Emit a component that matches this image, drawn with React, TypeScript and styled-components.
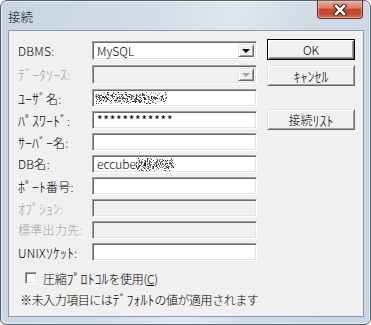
import React from 'react';
import styled, { createGlobalStyle, css } from 'styled-components';

const FONT = `"Noto Sans CJK JP", "Liberation Sans", sans-serif`;

const Global = createGlobalStyle`
  html, body { margin: 0; padding: 0; background: #ffffff; }
  body { width: 371px; height: 325px; overflow: hidden; }
  * { box-sizing: border-box; }
`;

const sunken = css`
  border: 1px solid;
  border-color: #a0a0a0 #ffffff #ffffff #a0a0a0;
  box-shadow: inset 1px 1px 0 #696969, inset -1px -1px 0 #e3e3e3;
`;

const raised = css`
  border: 1px solid;
  border-color: #e3e3e3 #696969 #696969 #e3e3e3;
  box-shadow: inset 1px 1px 0 #ffffff, inset -1px -1px 0 #a0a0a0;
`;

const Frame = styled.div`
  width: 371px;
  height: 325px;
  border: 1px solid #56616e;
  border-radius: 7px 7px 6px 6px;
  background: linear-gradient(100deg, #c9d5e3 0%, #d3dde8 38%, #e1e7ee 56%, #d2dce7 70%, #c9d5e2 100%);
  box-shadow: inset 0 0 0 1px rgba(255, 255, 255, 0.5);
  display: flex;
  flex-direction: column;
  font-family: ${FONT};
  font-weight: 300;
  overflow: hidden;
`;

/* half-width katakana run: Noto's half-width forms are drawn small, so they get a larger size */
const K = styled.span`
  font-size: 14px;
  line-height: 14px;
  letter-spacing: 0;
`;

const Masked = styled.span`
  letter-spacing: 0.75px;
  font-weight: 400;
`;

const TitleBar = styled.div`
  height: 29px;
  display: flex;
  align-items: flex-start;
  padding-left: 7px;
`;

const Title = styled.div`
  margin-top: 9px;
  font-size: 12.5px;
  line-height: 14px;
  color: #000000;
`;

const CloseButton = styled.div`
  margin-left: auto;
  margin-right: 7px;
  width: 46px;
  height: 18px;
  border: 1px solid #6a2b22;
  border-top: none;
  border-radius: 0 0 4px 4px;
  background: linear-gradient(180deg, #e9a99b 0%, #d9816c 40%, #c2452f 50%, #c44a33 75%, #d7745a 100%);
  box-shadow: inset 0 0 0 1px rgba(255, 210, 200, 0.45);
  display: flex;
  align-items: center;
  justify-content: center;
`;

const Client = styled.div`
  flex: 1;
  margin: 0 6px 7px 7px;
  border: 1px solid #8d99a7;
  background: #f0f0f0;
  display: grid;
  grid-template-columns: 239px 88px;
  column-gap: 10px;
  align-items: start;
  padding: 8px 8px 0 9px;
`;

const LeftCol = styled.div`
  display: flex;
  flex-direction: column;
  padding-top: 2px;
`;

const Row = styled.div<{ $h: number; $mb: number }>`
  display: flex;
  align-items: center;
  height: ${(p) => p.$h}px;
  margin-bottom: ${(p) => p.$mb}px;
`;

const Label = styled.div<{ $disabled?: boolean }>`
  width: 74px;
  font-size: 12px;
  line-height: 14px;
  letter-spacing: 0.3px;
  white-space: nowrap;
  color: ${(p) => (p.$disabled ? '#a2a2a2' : '#000000')};
`;

const TextBox = styled.div<{ $disabled?: boolean }>`
  ${sunken};
  width: 165px;
  height: 100%;
  padding-left: 4px;
  display: flex;
  align-items: center;
  font-size: 12px;
  line-height: 14px;
  color: #000000;
  white-space: nowrap;
  overflow: hidden;
  background: ${(p) => (p.$disabled ? '#f0f0f0' : '#ffffff')};
`;

const Combo = styled.div<{ $disabled?: boolean }>`
  ${sunken};
  width: 165px;
  height: 100%;
  display: flex;
  align-items: stretch;
  padding: 2px;
  background: ${(p) => (p.$disabled ? '#f0f0f0' : '#ffffff')};
`;

const ComboText = styled.div`
  flex: 1;
  display: flex;
  align-items: center;
  padding-left: 2px;
  font-size: 12px;
  line-height: 14px;
  color: #000000;
`;

const ComboArrow = styled.div`
  ${raised};
  width: 16px;
  background: #f0f0f0;
  display: flex;
  align-items: center;
  justify-content: center;
`;

const Triangle = styled.div<{ $disabled?: boolean }>`
  width: 0;
  height: 0;
  border-left: 4px solid transparent;
  border-right: 4px solid transparent;
  border-top: 4px solid ${(p) => (p.$disabled ? '#a0a0a0' : '#000000')};
`;

const RightCol = styled.div`
  display: flex;
  flex-direction: column;
`;

const Button = styled.div<{ $default?: boolean; $mt: number }>`
  height: 21px;
  margin-top: ${(p) => p.$mt}px;
  display: flex;
  align-items: center;
  justify-content: center;
  font-size: 12px;
  line-height: 14px;
  color: #000000;
  background: #f0f0f0;
  ${(p) =>
    p.$default
      ? css`
          border: 1px solid #000000;
          box-shadow: inset 1px 1px 0 #ffffff, inset -1px -1px 0 #696969, inset -2px -2px 0 #a0a0a0;
        `
      : raised};
`;

const CheckRow = styled.div`
  display: flex;
  align-items: center;
  height: 16px;
  margin-top: 9px;
  padding-left: 7px;
  gap: 6px;
`;

const CheckBox = styled.div`
  ${sunken};
  width: 12px;
  height: 12px;
  background: #ffffff;
`;

const CheckLabel = styled.div`
  font-size: 12px;
  line-height: 14px;
  letter-spacing: -0.3px;
  color: #000000;
  white-space: nowrap;
  u { text-decoration: underline; text-underline-offset: 1px; }
`;

const Note = styled.div`
  margin-top: 6px;
  padding-left: 2px;
  font-size: 12px;
  line-height: 14px;
  letter-spacing: -0.45px;
  color: #000000;
  white-space: nowrap;
`;

function makeRng(seed: number) {
  let s = seed;
  return () => {
    s = (s * 1103515245 + 12345) & 0x7fffffff;
    return s / 0x7fffffff;
  };
}

const Mosaic: React.FC<{ w: number; h: number; seed: number }> = ({ w, h, seed }) => {
  const r = makeRng(seed);
  const rects: React.ReactElement[] = [];
  for (let y = 0; y < h; y++) {
    for (let x = 0; x < w; x++) {
      const edge = y < 2 || y > h - 3 ? 0.18 : 0.42;
      if (r() < edge) {
        const g = Math.floor(20 + r() * 150);
        rects.push(<rect key={`${x}-${y}`} x={x} y={y} width={1} height={1} fill={`rgb(${g},${g},${g})`} />);
      }
    }
  }
  return (
    <svg width={w} height={h} shapeRendering="crispEdges" style={{ display: 'block', flexShrink: 0 }}>
      {rects}
    </svg>
  );
};

const CloseGlyph = () => (
  <svg width="14" height="12" viewBox="0 0 14 12">
    <path d="M3 2 L11 10 M11 2 L3 10" stroke="#3d1a14" strokeWidth="4.6" strokeLinecap="square" />
    <path d="M3 2 L11 10 M11 2 L3 10" stroke="#ffffff" strokeWidth="2.6" strokeLinecap="square" />
  </svg>
);

export default function App() {
  return (
    <>
      <Global />
      <Frame>
        <TitleBar>
          <Title>接続</Title>
          <CloseButton>
            <CloseGlyph />
          </CloseButton>
        </TitleBar>
        <Client>
          <LeftCol>
            <Row $h={19} $mb={5}>
              <Label>DBMS:</Label>
              <Combo>
                <ComboText>MySQL</ComboText>
                <ComboArrow>
                  <Triangle />
                </ComboArrow>
              </Combo>
            </Row>
            <Row $h={19} $mb={5}>
              <Label $disabled><K>ﾃﾞｰﾀｿｰｽ</K>:</Label>
              <Combo $disabled>
                <ComboText />
                <ComboArrow>
                  <Triangle $disabled />
                </ComboArrow>
              </Combo>
            </Row>
            <Row $h={18} $mb={4}>
              <Label><K>ﾕｰｻﾞ</K>名:</Label>
              <TextBox style={{ paddingLeft: 2 }}>
                <Mosaic w={72} h={12} seed={7} />
              </TextBox>
            </Row>
            <Row $h={18} $mb={4}>
              <Label><K>ﾊﾟｽﾜｰﾄﾞ</K>:</Label>
              <TextBox><Masked>************</Masked></TextBox>
            </Row>
            <Row $h={18} $mb={4}>
              <Label><K>ｻｰﾊﾞｰ</K>名:</Label>
              <TextBox />
            </Row>
            <Row $h={18} $mb={4}>
              <Label>DB名:</Label>
              <TextBox>
                eccube
                <Mosaic w={38} h={13} seed={23} />
              </TextBox>
            </Row>
            <Row $h={18} $mb={4}>
              <Label><K>ﾎﾟｰﾄ</K>番号:</Label>
              <TextBox />
            </Row>
            <Row $h={18} $mb={4}>
              <Label $disabled><K>ｵﾌﾟｼｮﾝ</K>:</Label>
              <TextBox $disabled />
            </Row>
            <Row $h={18} $mb={4}>
              <Label $disabled>標準出力先:</Label>
              <TextBox $disabled />
            </Row>
            <Row $h={18} $mb={0}>
              <Label>UNIX<K>ｿｹｯﾄ</K>:</Label>
              <TextBox />
            </Row>
            <CheckRow>
              <CheckBox />
              <CheckLabel>
                圧縮<K>ﾌﾟﾛﾄｺﾙ</K>を使用(<u>C</u>)
              </CheckLabel>
            </CheckRow>
            <Note>※未入力項目には<K>ﾃﾞﾌｫﾙﾄ</K>の値が適用されます</Note>
          </LeftCol>
          <RightCol>
            <Button $default $mt={0}>OK</Button>
            <Button $mt={5}><K>ｷｬﾝｾﾙ</K></Button>
            <Button $mt={23}>接続<K>ﾘｽﾄ</K></Button>
          </RightCol>
        </Client>
      </Frame>
    </>
  );
}
